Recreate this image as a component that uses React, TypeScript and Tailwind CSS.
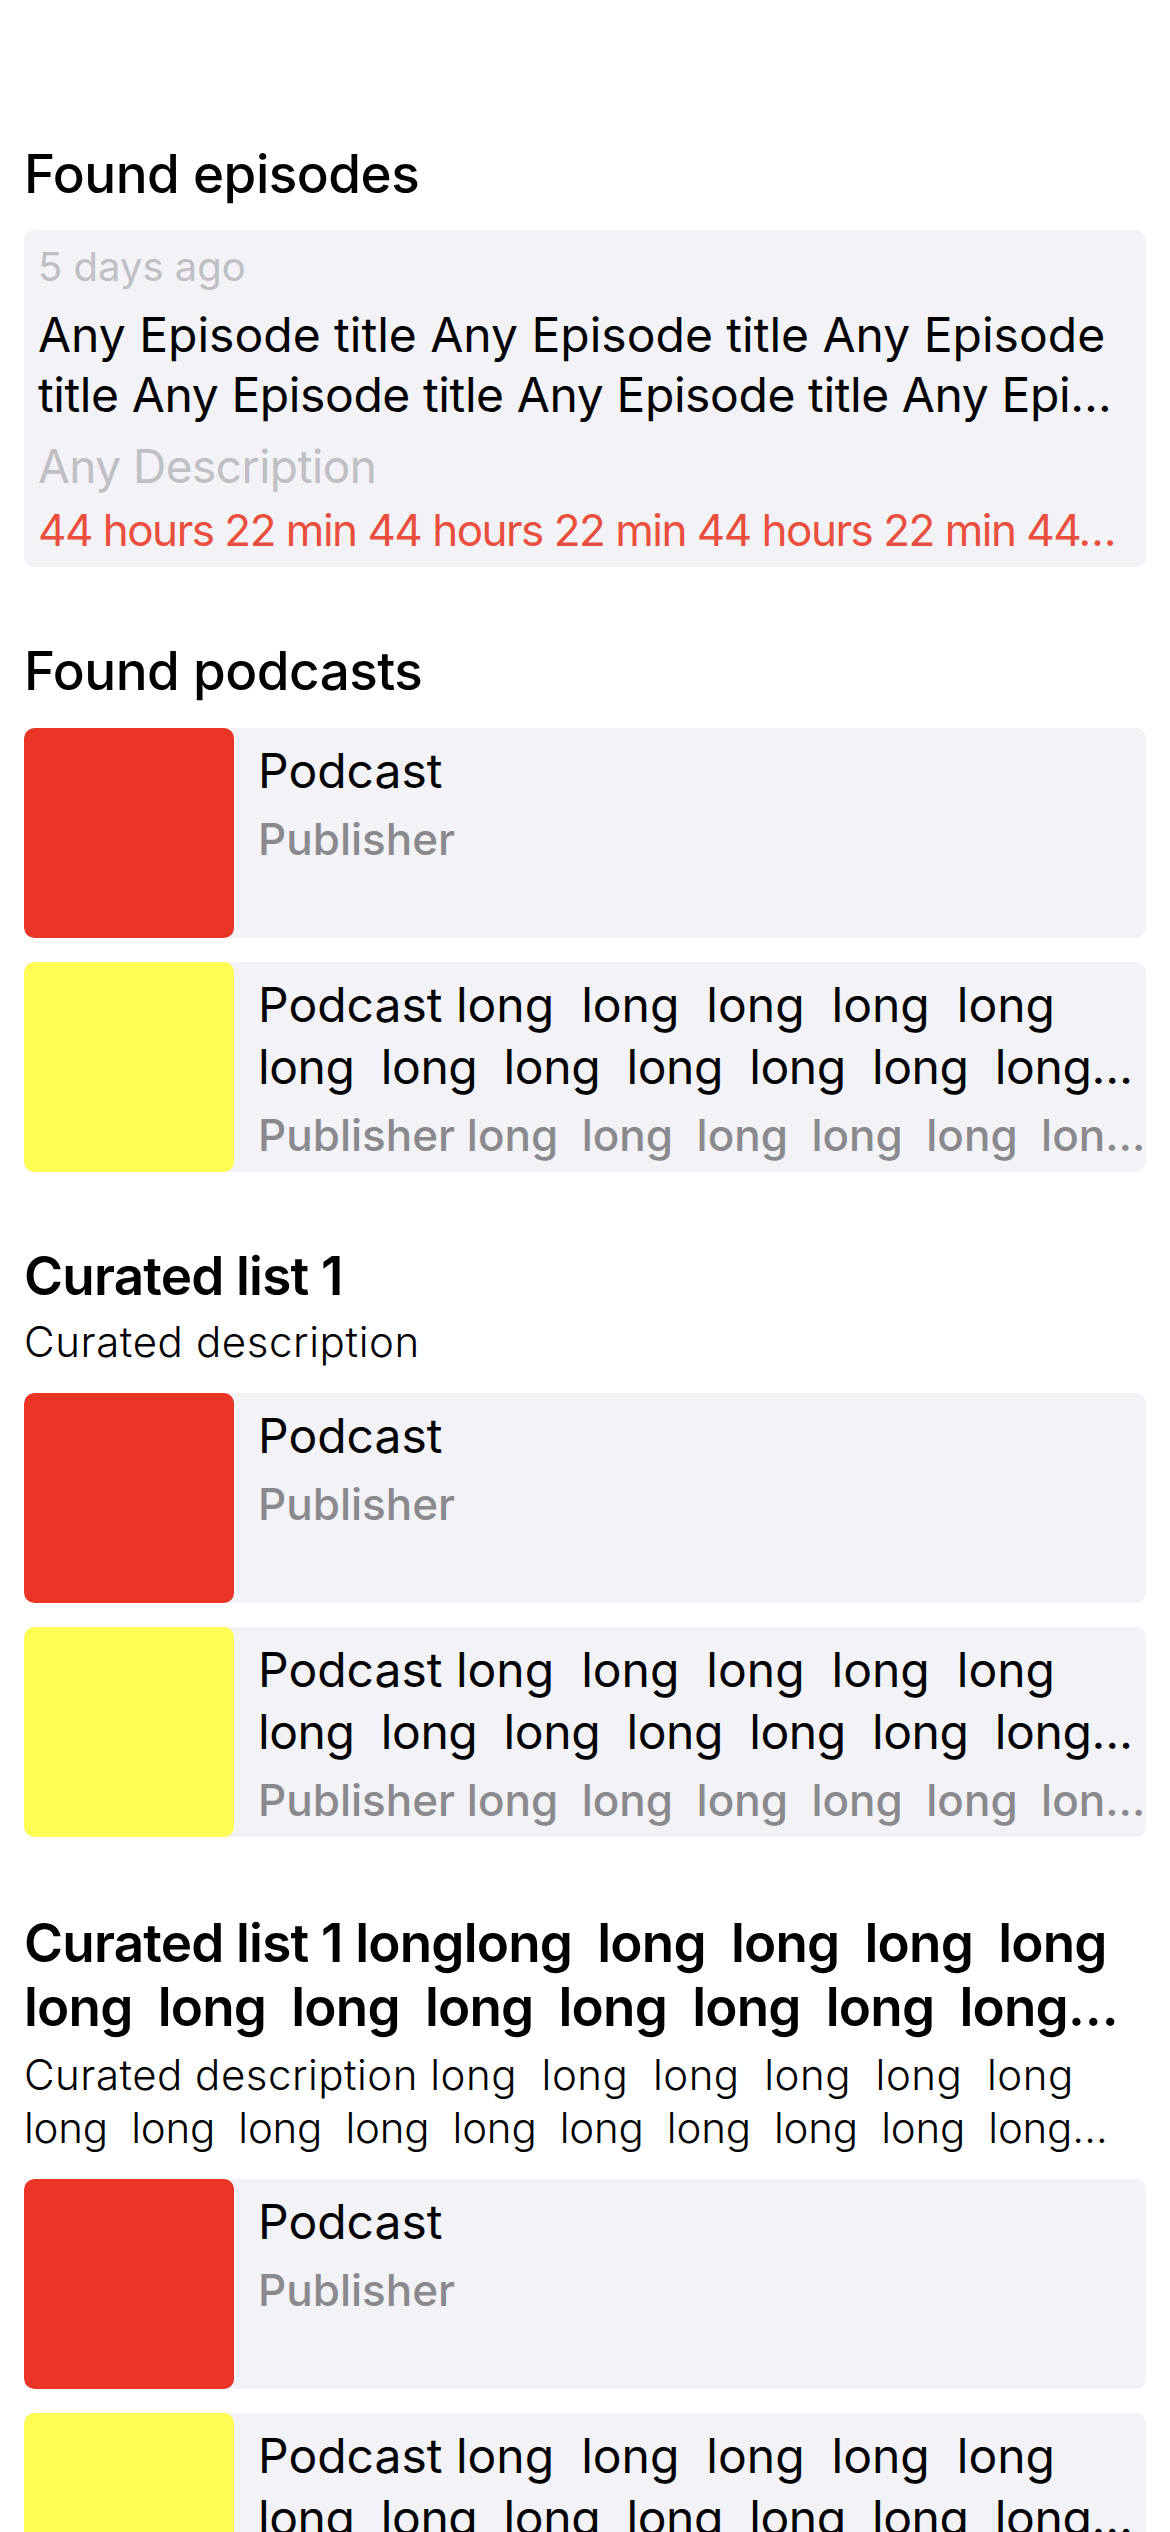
import React from "react";

const font = { fontFamily: "Inter, 'Noto Sans', sans-serif" };

const rep = (s: string, n: number, sep = " ") => Array(n).fill(s).join(sep);
const longs = (n: number) => rep("long", n, "  ");

function PodcastCard({
  color,
  line1,
  line2,
  publisher,
}: {
  color: string;
  line1: string;
  line2?: string;
  publisher: string;
}) {
  return (
    <div className="flex h-[210px] rounded-[10px] bg-[#f2f2f7] overflow-hidden">
      <div className={`w-[210px] h-[210px] shrink-0 rounded-[10px] ${color}`} />
      <div className="flex-1 min-w-0 pl-[24px] pt-[12px]">
        <div className="text-[48px] leading-[62px] text-black whitespace-pre overflow-hidden">{line1}</div>
        {line2 && (
          <div className="text-[48px] leading-[62px] tracking-[-0.4px] text-black whitespace-pre truncate">{line2}</div>
        )}
        <div className="mt-[10px] text-[44px] leading-[54px] font-medium text-[#8a8a8e] truncate whitespace-pre">
          {publisher}
        </div>
      </div>
    </div>
  );
}

function PodcastPair() {
  return (
    <div className="flex flex-col gap-[24px]">
      <PodcastCard color="bg-[#ea3526]" line1="Podcast" publisher="Publisher" />
      <PodcastCard
        color="bg-[#fffd54]"
        line1={"Podcast long  " + longs(4)}
        line2={longs(7) + "…"}
        publisher={"Publisher long  " + longs(12)}
      />
    </div>
  );
}

export default function App() {
  return (
    <div className="min-h-[2532px] bg-white px-[24px] pt-[142px]" style={font}>
      <div className="flex flex-col gap-[72px]">
        <section>
          <h2 className="text-[53px] leading-[64px] font-medium tracking-[-0.5px] text-black">Found episodes</h2>
          <div className="mt-[24px] rounded-[10px] bg-[#f2f2f7] pl-[14px] pr-[14px] pt-[13px] pb-[9px]">
            <div className="text-[40px] leading-[48px] text-[#bfbfc4]">5 days ago</div>
            <div className="mt-[14px] text-[48px] leading-[60px] text-black whitespace-nowrap overflow-hidden">
              Any Episode title Any Episode title Any Episode
            </div>
            <div className="text-[48px] leading-[60px] tracking-[-0.4px] text-black truncate">
              title Any Episode title Any Episode title Any Epi…
            </div>
            <div className="mt-[13px] text-[46px] leading-[56px] tracking-[-0.5px] text-[#bfbfc4] truncate">
              Any Description
            </div>
            <div className="mt-[8px] text-[44px] leading-[56px] tracking-[-1.5px] text-[#ea4e3d] truncate">
              44 hours 22 min 44 hours 22 min 44 hours 22 min 44…
            </div>
          </div>
        </section>

        <section>
          <h2 className="text-[53px] leading-[64px] font-medium tracking-[-0.5px] text-black">Found podcasts</h2>
          <div className="mt-[25px]">
            <PodcastPair />
          </div>
        </section>

        <section>
          <h2 className="text-[53px] leading-[64px] font-semibold tracking-[-0.8px] text-black">Curated list 1</h2>
          <p className="mt-[8px] text-[42px] leading-[52px] font-light tracking-[0.6px] text-black">
            Curated description
          </p>
          <div className="mt-[25px]">
            <PodcastPair />
          </div>
        </section>

        <section className="pt-[2px]">
          <h2 className="text-[53px] leading-[64px] font-semibold tracking-[-0.8px] text-black">
            <span className="block whitespace-pre overflow-hidden">{"Curated list 1 longlong  " + longs(4)}</span>
            <span className="block whitespace-pre truncate">{longs(8) + "…"}</span>
          </h2>
          <p className="mt-[9px] text-[42px] leading-[53px] font-light tracking-[0.5px] text-black">
            <span className="block whitespace-pre overflow-hidden">{"Curated description long  " + longs(5)}</span>
            <span className="block whitespace-pre truncate tracking-[-0.2px]">{longs(10) + "…"}</span>
          </p>
          <div className="mt-[25px]">
            <PodcastPair />
          </div>
        </section>
      </div>
    </div>
  );
}
